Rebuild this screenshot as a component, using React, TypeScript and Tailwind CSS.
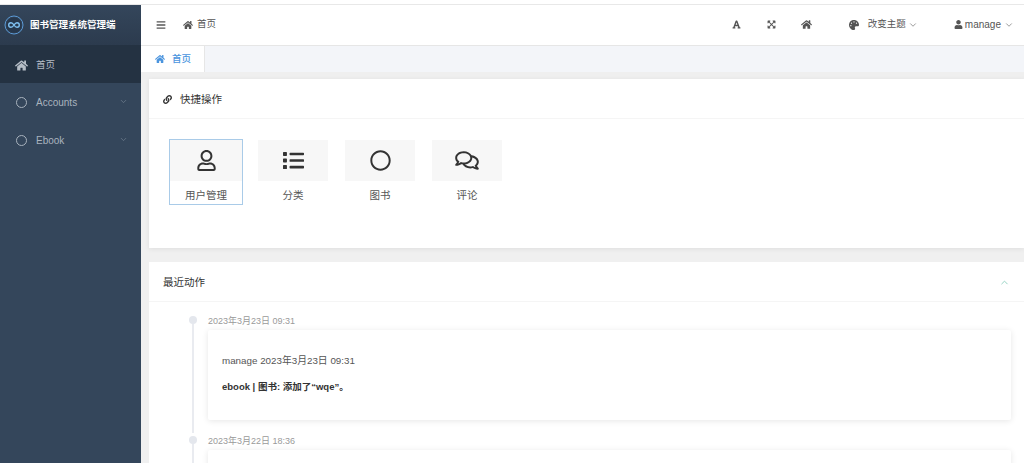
import { ChevronDown, ChevronUp } from 'lucide-react'
import { FaHome, FaLink, FaPalette, FaUser, FaFont, FaExpandArrowsAlt, FaBars, FaList, FaRegUser, FaRegCircle, FaRegComments } from 'react-icons/fa'

const shortcuts = [
  { name: '用户管理', icon: <FaRegUser className="h-[21px] w-[21px]" />, active: true },
  { name: '分类', icon: <FaList className="h-[21px] w-[21px]" /> },
  { name: '图书', icon: <FaRegCircle className="h-[21px] w-[21px]" /> },
  { name: '评论', icon: <FaRegComments className="h-[21px] w-[24px]" /> },
]

const sideItems = ['Accounts', 'Ebook']

function Sidebar() {
  return (
    <aside className="flex w-[141px] shrink-0 flex-col bg-[#34465b]">
      <div className="flex h-10 items-center gap-[6px] bg-gradient-to-b from-[#34465b] to-[#2c3b4e] pl-[4px]">
        <svg width="20" height="20" viewBox="0 0 20 20" fill="none">
          <circle cx="10" cy="10" r="9" stroke="#5b9bd8" strokeWidth="1" />
          <circle cx="10" cy="10" r="7.5" fill="#26374c" />
          <path d="M10 10c-1-1.6-2-2.3-3-2.3a2.3 2.3 0 0 0 0 4.6c1 0 2-.7 3-2.3zm0 0c1-1.6 2-2.3 3-2.3a2.3 2.3 0 0 1 0 4.6c-1 0-2-.7-3-2.3z" stroke="#7fc1f2" strokeWidth="1.4" />
        </svg>
        <span className="text-[9.5px] font-bold text-white">图书管理系统管理端</span>
      </div>
      <div className="flex h-[38px] items-center bg-[#243242] pl-[15px] pt-[3px] text-[#b5bdc6]">
        <FaHome className="h-[13px] w-[13px]" />
        <span className="ml-[8px] text-[9.5px]">首页</span>
      </div>
      {sideItems.map((item) => (
        <div key={item} className="flex h-[38px] items-center pl-[16px] pr-[13px] pt-[1px] text-[#a9b3be]">
          <span className="h-[11px] w-[11px] rounded-full border border-[#a9b3be]" />
          <span className="ml-[9px] flex-1 text-[10px]">{item}</span>
          <ChevronDown className="mb-[3px] h-[9px] w-[9px] text-[#6f7e8e]" />
        </div>
      ))}
    </aside>
  )
}

function Topbar() {
  return (
    <header className="flex h-[41px] shrink-0 items-center border-b border-[#e6e6e6] bg-white pb-[1px] pl-[15px] text-[#555]">
      <FaBars className="h-[10px] w-[10px]" />
      <FaHome className="ml-[17px] h-[10px] w-[10px]" />
      <span className="ml-[4px] text-[9.5px]">首页</span>
      <div className="ml-auto flex items-center">
        <FaFont className="h-[9px] w-[9px]" />
        <FaExpandArrowsAlt className="ml-[26px] h-[9px] w-[9px]" />
        <FaHome className="ml-[25px] h-[11px] w-[11px]" />
        <FaPalette className="ml-[37px] h-[10px] w-[10px]" />
        <span className="ml-[9px] text-[9.5px]">改变主题</span>
        <ChevronDown className="ml-[2px] h-[10px] w-[10px] text-[#888]" />
        <FaUser className="ml-[36px] h-[9px] w-[9px]" />
        <span className="ml-[2px] text-[10px]">manage</span>
        <ChevronDown className="ml-[3px] mr-[10px] h-[10px] w-[10px] text-[#888]" />
      </div>
    </header>
  )
}

function Shortcut({ name, icon, active }: { name: string; icon: React.ReactNode; active?: boolean }) {
  return (
    <div className={`flex h-[66px] flex-col items-center ${active ? 'mr-[-2px] w-[74px] border border-[#a9cbe8]' : 'w-[70px] border-y border-transparent'}`}>
      <div className="flex h-[41px] w-full shrink-0 items-center justify-center bg-[#f7f7f7] text-[#333]">
        {icon}
      </div>
      <span className="mt-[7px] text-[10.5px] text-[#555]">{name}</span>
    </div>
  )
}

function Activity({ time, user, text }: { time: string; user?: string; text?: string }) {
  return (
    <div className="relative pl-[59px] pr-[13px] pb-[13px]">
      <span className="absolute left-[40px] top-[3px] h-[8px] w-[8px] rounded-full bg-[#e4e7ed]" />
      <span className="absolute bottom-0 left-[43px] top-[11px] w-[2px] bg-[#e9ebf0]" />
      <div className="h-[15px] pt-[1px] text-[9px] leading-[15px] text-[#9a9a9a]">{time}</div>
      <div className="mt-[2px] h-[90px] rounded-[2px] bg-white px-[14px] pt-[24px] shadow-[0_1px_6px_rgba(0,0,0,0.1)]">
        {user && <p className="text-[9.8px] leading-[14px] text-[#555]">{user}</p>}
        {text && <p className="mt-[12px] text-[9.5px] font-bold leading-[14px] text-[#333]">{text}</p>}
      </div>
    </div>
  )
}

export default function App() {
  return (
    <div className="h-[463px] w-[1024px] overflow-hidden bg-white">
      <div className="h-[5px] border-b border-[#e8e8e8]" />
      <div className="flex h-[458px] font-['Liberation_Sans','Noto_Sans_CJK_SC',sans-serif]">
        <Sidebar />
        <main className="flex min-w-0 flex-1 flex-col overflow-hidden bg-[#f0f0f0]">
          <Topbar />
          <div className="flex h-[26px] shrink-0 bg-[#f3f5f9]">
            <div className="flex w-[64px] items-center justify-center gap-[7px] border-r border-[#e6e6e6] bg-white pl-[1px] text-[#4a94de]">
              <FaHome className="h-[10px] w-[10px]" />
              <span className="text-[9.5px] font-medium">首页</span>
            </div>
          </div>
          <div className="h-[7px] shrink-0 bg-[#efefef]" />
          <section className="ml-2 h-[169px] shrink-0 bg-white shadow-[0_1px_5px_rgba(0,0,0,0.08)]">
            <div className="flex h-[40px] items-center gap-[8px] border-b border-[#f5f5f5] pl-[14px] pt-[2px] text-[#333]">
              <FaLink className="h-[9px] w-[9px]" />
              <span className="text-[10.5px]">快捷操作</span>
            </div>
            <div className="flex gap-[17px] pl-5 pt-5">
              {shortcuts.map((s) => (
                <Shortcut key={s.name} {...s} />
              ))}
            </div>
          </section>
          <section className="ml-2 mt-[14px] flex-1 bg-white">
            <div className="flex h-[40px] items-center justify-between border-b border-[#f5f5f5] px-[14px] pt-[2px]">
              <span className="text-[10.5px] text-[#333]">最近动作</span>
              <ChevronUp className="h-[11px] w-[11px] text-[#8fd0c0]" />
            </div>
            <div className="pt-[11px]">
              <Activity time="2023年3月23日 09:31" user="manage 2023年3月23日 09:31" text="ebook | 图书: 添加了“wqe”。" />
              <Activity time="2023年3月22日 18:36" />
            </div>
          </section>
        </main>
      </div>
    </div>
  )
}
